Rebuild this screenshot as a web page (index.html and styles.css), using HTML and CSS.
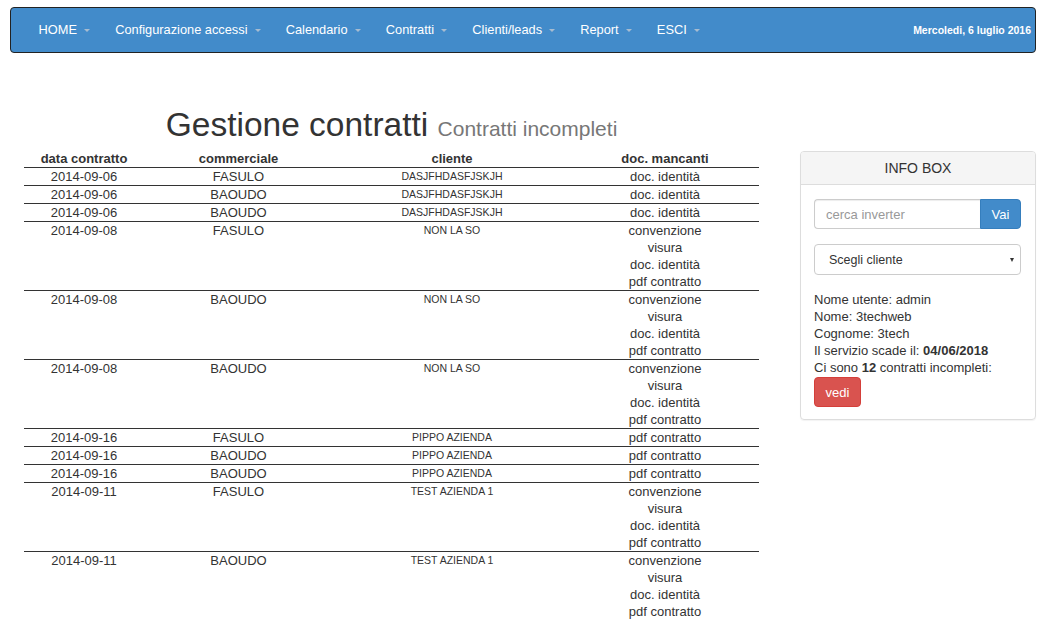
FILE: index.html
```html
<!DOCTYPE html>
<html lang="it">
<head>
    <meta charset="UTF-8">
    <meta name="viewport" content="width=device-width, initial-scale=1.0">
    <title>Gestione contratti</title>
    <link rel="stylesheet" href="styles.css">
</head>
<body>
    <div class="page">
        <nav class="navbar">
            <ul class="nav">
                <li><a href="#">HOME<span class="caret"></span></a></li>
                <li><a href="#">Configurazione accessi<span class="caret"></span></a></li>
                <li><a href="#">Calendario<span class="caret"></span></a></li>
                <li><a href="#">Contratti<span class="caret"></span></a></li>
                <li><a href="#">Clienti/leads<span class="caret"></span></a></li>
                <li><a href="#">Report<span class="caret"></span></a></li>
                <li><a href="#">ESCI<span class="caret"></span></a></li>
            </ul>
            <div class="today">Mercoledi, 6 luglio 2016</div>
        </nav>

        <div class="content">
            <div class="main-col">
                <h1>Gestione contratti <small>Contratti incompleti</small></h1>
                <table class="contratti">
                    <thead>
                        <tr>
                            <th class="c-data">data contratto</th>
                            <th class="c-comm">commerciale</th>
                            <th class="c-cliente">cliente</th>
                            <th class="c-doc">doc. mancanti</th>
                        </tr>
                    </thead>
                    <tbody>
                        <tr><td>2014-09-06</td><td>FASULO</td><td class="cliente">DASJFHDASFJSKJH</td><td>doc. identità</td></tr>
                        <tr><td>2014-09-06</td><td>BAOUDO</td><td class="cliente">DASJFHDASFJSKJH</td><td>doc. identità</td></tr>
                        <tr><td>2014-09-06</td><td>BAOUDO</td><td class="cliente">DASJFHDASFJSKJH</td><td>doc. identità</td></tr>
                        <tr><td>2014-09-08</td><td>FASULO</td><td class="cliente">NON LA SO</td><td>convenzione<br>visura<br>doc. identità<br>pdf contratto</td></tr>
                        <tr><td>2014-09-08</td><td>BAOUDO</td><td class="cliente">NON LA SO</td><td>convenzione<br>visura<br>doc. identità<br>pdf contratto</td></tr>
                        <tr><td>2014-09-08</td><td>BAOUDO</td><td class="cliente">NON LA SO</td><td>convenzione<br>visura<br>doc. identità<br>pdf contratto</td></tr>
                        <tr><td>2014-09-16</td><td>FASULO</td><td class="cliente">PIPPO AZIENDA</td><td>pdf contratto</td></tr>
                        <tr><td>2014-09-16</td><td>BAOUDO</td><td class="cliente">PIPPO AZIENDA</td><td>pdf contratto</td></tr>
                        <tr><td>2014-09-16</td><td>BAOUDO</td><td class="cliente">PIPPO AZIENDA</td><td>pdf contratto</td></tr>
                        <tr><td>2014-09-11</td><td>FASULO</td><td class="cliente">TEST AZIENDA 1</td><td>convenzione<br>visura<br>doc. identità<br>pdf contratto</td></tr>
                        <tr><td>2014-09-11</td><td>BAOUDO</td><td class="cliente">TEST AZIENDA 1</td><td>convenzione<br>visura<br>doc. identità<br>pdf contratto</td></tr>
                    </tbody>
                </table>
            </div>

            <div class="side-col">
                <div class="panel">
                    <div class="panel-heading">INFO BOX</div>
                    <div class="panel-body">
                        <div class="input-group">
                            <input type="text" class="form-control" placeholder="cerca inverter">
                            <button class="btn btn-primary">Vai</button>
                        </div>
                        <div class="select-wrap">
                            <select class="form-select">
                                <option>Scegli cliente</option>
                            </select>
                        </div>
                        <div class="info">
                            Nome utente: admin<br>
                            Nome: 3techweb<br>
                            Cognome: 3tech<br>
                            Il servizio scade il: <b>04/06/2018</b><br>
                            Ci sono <b>12</b> contratti incompleti:
                        </div>
                        <button class="btn btn-danger">vedi</button>
                    </div>
                </div>
            </div>
        </div>
    </div>
</body>
</html>
```

FILE: styles.css
```css
body {
    margin: 0;
    font-family: "Liberation Sans", Arial, sans-serif;
    font-size: 13px;
    color: #333;
    background: #fff;
}
.page {
    padding: 7px 26px 0 10px;
}
.navbar {
    display: flex;
    align-items: center;
    height: 44px;
    background-color: #428bca;
    border: 1px solid #222;
    border-radius: 4px;
}
.nav {
    display: flex;
    list-style: none;
    margin: 0;
    padding: 0 0 0 15px;
}
.nav a {
    display: block;
    padding: 0 12.6px;
    line-height: 44px;
    color: #fff;
    text-decoration: none;
    font-size: 12.8px;
}
.caret {
    display: inline-block;
    width: 0;
    height: 0;
    margin-left: 7px;
    vertical-align: middle;
    border-top: 3px solid #a7bcd0;
    border-left: 3px solid transparent;
    border-right: 3px solid transparent;
}
.today {
    margin-left: auto;
    padding-right: 4px;
    color: #fff;
    font-size: 10.5px;
    font-weight: bold;
}
.content {
    display: flex;
    align-items: flex-start;
}
.main-col {
    width: 735px;
    margin-left: 14px;
}
h1 {
    margin: 53px 0 6px;
    font-size: 33.5px;
    font-weight: normal;
    line-height: 38px;
    text-align: center;
    color: #333;
}
h1 small {
    font-size: 21px;
    line-height: 1;
    color: #777;
}
.contratti {
    width: 735px;
    border-collapse: collapse;
    table-layout: fixed;
}
.contratti th,
.contratti td {
    padding: 0;
    line-height: 17px;
    text-align: center;
    vertical-align: top;
}
.contratti th {
    font-weight: bold;
}
.contratti td {
    border-top: 1px solid #333;
}
.c-data { width: 120px; }
.c-comm { width: 189px; }
.c-cliente { width: 238px; }
.c-doc { width: 188px; }
.contratti td.cliente {
    font-size: 10.5px;
}
.side-col {
    width: 236px;
    margin-left: auto;
    margin-top: 98px;
}
.panel {
    border: 1px solid #ddd;
    border-radius: 4px;
    box-shadow: 0 1px 1px rgba(0, 0, 0, 0.05);
}
.panel-heading {
    height: 32px;
    line-height: 32px;
    text-align: center;
    font-size: 14px;
    background-color: #f5f5f5;
    border-bottom: 1px solid #ddd;
    border-radius: 3px 3px 0 0;
}
.panel-body {
    padding: 14px 14px 12px 13px;
}
.input-group {
    display: flex;
    height: 30px;
}
.form-control {
    flex: 1;
    min-width: 0;
    box-sizing: border-box;
    height: 30px;
    margin: 0;
    padding: 0 11px;
    font-family: inherit;
    font-size: 13px;
    color: #555;
    border: 1px solid #ccc;
    border-right: 0;
    border-radius: 4px 0 0 4px;
    box-shadow: inset 0 1px 1px rgba(0, 0, 0, 0.075);
}
.form-control::placeholder {
    color: #999;
}
.btn {
    font-family: inherit;
    font-size: 13px;
    color: #fff;
    border: 1px solid transparent;
    cursor: pointer;
}
.btn-primary {
    width: 41px;
    height: 30px;
    padding: 0;
    background-color: #428bca;
    border-color: #357ebd;
    border-radius: 0 4px 4px 0;
}
.select-wrap {
    position: relative;
    margin-top: 15px;
}
.select-wrap::after {
    content: "";
    position: absolute;
    right: 7px;
    top: 14px;
    border-top: 4px solid #333;
    border-left: 2.5px solid transparent;
    border-right: 2.5px solid transparent;
}
.form-select {
    display: block;
    width: 100%;
    height: 31px;
    box-sizing: border-box;
    padding: 0 0 0 14px;
    font-family: inherit;
    font-size: 12.5px;
    color: #333;
    background: #fff;
    border: 1px solid #ccc;
    border-radius: 4px;
    appearance: none;
    -webkit-appearance: none;
}
.info {
    margin-top: 16px;
    line-height: 17px;
}
.btn-danger {
    margin-top: 1px;
    width: 47px;
    height: 30px;
    padding: 0;
    background-color: #d9534f;
    border-color: #d43f3a;
    border-radius: 4px;
}
```
